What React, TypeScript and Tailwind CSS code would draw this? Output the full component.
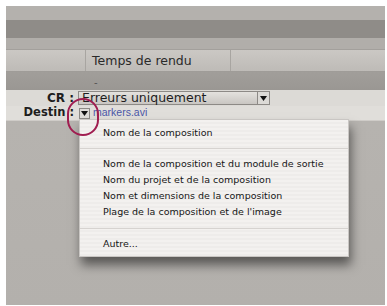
import React from 'react';

const menuItems = [
  'Nom de la composition et du module de sortie',
  'Nom du projet et de la composition',
  'Nom et dimensions de la composition',
  "Plage de la composition et de l'image",
];

const Arrow = () => (
  <svg width="7" height="5" viewBox="0 0 7 5">
    <path d="M0 0h7L3.5 5z" fill="#111" />
  </svg>
);

const Separator: React.FC<{ h: string }> = ({ h }) => (
  <div className={`${h} flex items-center`}>
    <div className="w-full h-px bg-[#d6d3d0]" />
  </div>
);

export default function App() {
  return (
    <div className="w-[387px] h-[306px] bg-white pl-[6px] pt-[6px] pr-[2px] pb-[1px] font-['DejaVu_Sans',sans-serif] text-[#1e1e1e]">
      <div className="relative w-full h-full flex flex-col bg-[#b5b2ae] overflow-hidden">
        <div className="h-[14px] bg-[#b4b1ad]" />
        <div className="h-[18px] bg-[#8f8c88]" />
        <div className="h-[12px] bg-[#b1aeaa] border-b border-[#a3a09c]" />
        <div className="h-[22px] flex bg-gradient-to-b from-[#cbc8c4] to-[#bebbb7] border-b border-[#9f9c98]">
          <div className="w-[80px] border-r border-[#a8a5a1]" />
          <div className="w-[145px] border-r border-[#a8a5a1] pl-[6px] pt-[1px] flex items-center text-[12.5px] text-[#2a2a2a]">
            Temps de rendu
          </div>
          <div className="flex-1" />
        </div>
        <div className="h-[18px] bg-gradient-to-b from-[#a19e9a] to-[#9a9793] relative">
          <span className="absolute left-[88px] top-[3px] text-[10px] text-[#555]">-</span>
        </div>
        <div className="h-[16px] flex items-center bg-[#dcdad6]">
          <div className="w-[68px] text-right text-[12px] font-bold">CR :</div>
          <div className="ml-[4px] w-[192px] h-[14px] flex items-center border border-[#8d8a86] bg-gradient-to-b from-[#e4e2de] to-[#c9c6c2]">
            <span className="flex-1 pl-[3px] text-[12.5px] leading-none">Erreurs uniquement</span>
            <div className="w-[12px] h-full border-l border-[#8d8a86] flex items-center justify-center bg-[#dcdad6]">
              <Arrow />
            </div>
          </div>
        </div>
        <div className="h-[15px] flex items-center bg-[#e0deda] border-b border-[#cfccc8]">
          <div className="w-[68px] text-right text-[11.5px] font-bold">Destin :</div>
          <div className="ml-[5px] w-[11px] h-[11px] flex items-center justify-center border border-[#8d8a86] bg-[#dedcd8]">
            <Arrow />
          </div>
          <span className="ml-[3px] text-[10.5px] font-['Liberation_Sans',sans-serif] text-[#4b57a8]">markers.avi</span>
        </div>
        <div className="flex-1 bg-gradient-to-b from-[#b6b3af] to-[#b3b0ac]" />

        <div className="absolute left-[73px] top-[113px] w-[270px] h-[138px] bg-[repeating-linear-gradient(180deg,#f3f1ef_0px,#f3f1ef_2px,#eeecea_2px,#eeecea_4px)] border border-[#c9c6c3] shadow-[2px_8px_10px_rgba(0,0,0,0.5)] pt-[5px] pb-[5px] text-[9.5px] text-[#161616]">
          <div className="h-[16px] flex items-center pl-[23px]">Nom de la composition</div>
          <Separator h="h-[15px]" />
          {menuItems.map((item) => (
            <div key={item} className="h-[16px] flex items-center pl-[23px]">
              {item}
            </div>
          ))}
          <Separator h="h-[16px]" />
          <div className="h-[16px] flex items-center pl-[23px]">Autre...</div>
        </div>

        <div className="absolute left-[61px] top-[92px] w-[32px] h-[38px] rounded-full border-[2.5px] border-[#a01d50]" />
      </div>
    </div>
  );
}
